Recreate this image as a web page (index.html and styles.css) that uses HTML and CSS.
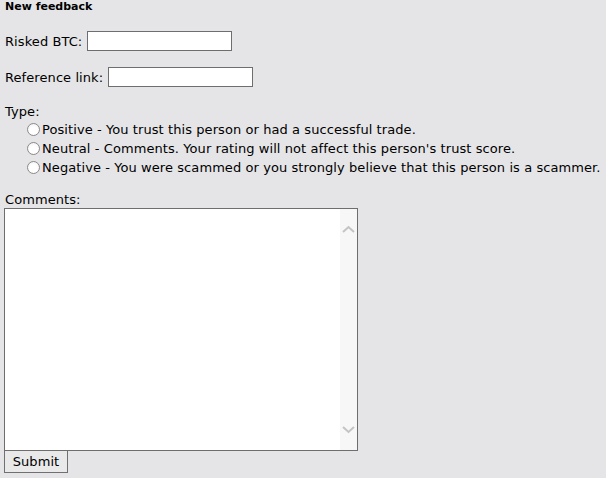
FILE: index.html
```html
<!DOCTYPE html>
<html>
<head>
<meta charset="utf-8">
<link rel="stylesheet" href="styles.css">
</head>
<body>
<div class="title">New feedback</div>
<form class="form">
  <div class="row"><label>Risked BTC:</label> <input class="field" type="text"></div>
  <div class="row"><label>Reference link:</label> <input class="field" type="text"></div>
  <div class="type">
    <div class="type-label">Type:</div>
    <label class="opt"><input class="radio" type="radio" name="t">Positive - You trust this person or had a successful trade.</label>
    <label class="opt"><input class="radio" type="radio" name="t">Neutral - Comments. Your rating will not affect this person's trust score.</label>
    <label class="opt"><input class="radio" type="radio" name="t">Negative - You were scammed or you strongly believe that this person is a scammer.</label>
  </div>
  <div class="comments-label">Comments:</div>
  <div class="textbox">
    <textarea class="ta"></textarea>
    <div class="scroll">
      <svg width="17" height="14" viewBox="0 0 17 14"><path d="M3 9 L8.5 4 L14 9" fill="none" stroke="#c4c4c4" stroke-width="2"/></svg>
      <svg width="17" height="14" viewBox="0 0 17 14"><path d="M3 5 L8.5 10 L14 5" fill="none" stroke="#c4c4c4" stroke-width="2"/></svg>
    </div>
  </div>
  <button class="submit" type="button">Submit</button>
</form>
</body>
</html>
```
FILE: styles.css
```css
html, body {
  margin: 0;
  background: #e5e5e7;
}
body {
  padding: 0 4px;
  font-family: "DejaVu Sans", Verdana, sans-serif;
  font-size: 13px;
  letter-spacing: 0.08px;
  color: #000;
}
.title {
  font-weight: bold;
  font-size: 11px;
  letter-spacing: 0;
  line-height: 14px;
  padding-left: 1px;
}
.form {
  display: flex;
  flex-direction: column;
  align-items: flex-start;
}
.row {
  display: flex;
  align-items: center;
  gap: 5px;
  padding-left: 1px;
  margin-top: 17px;
  height: 20px;
}
.row + .row {
  margin-top: 16px;
}
.field {
  width: 145px;
  height: 20px;
  box-sizing: border-box;
  border: 1px solid #6e6e6e;
  background: #fff;
  margin: 0;
  padding: 0 2px;
}
.type {
  margin-top: 16px;
  padding-left: 1px;
  line-height: 19px;
}
.type-label {
  line-height: 17px;
}
.opt {
  display: flex;
  align-items: center;
  padding-left: 21px;
  white-space: nowrap;
}
.radio {
  appearance: none;
  -webkit-appearance: none;
  width: 13px;
  height: 13px;
  margin: 0 2px 0 1px;
  border: 1px solid #8a8a8a;
  border-radius: 50%;
  background: radial-gradient(circle at 50% 60%, #ffffff 40%, #ededed 100%);
  box-sizing: border-box;
}
.comments-label {
  margin-top: 15px;
  padding-left: 1px;
  line-height: 16px;
}
.textbox {
  display: flex;
  width: 354px;
  height: 243px;
  box-sizing: border-box;
  border: 1px solid #6e6e6e;
  background: #fff;
}
.ta {
  flex: 1;
  border: none;
  outline: none;
  resize: none;
  margin: 0;
  padding: 2px;
  background: #fff;
}
.scroll {
  width: 17px;
  background: #f7f7f7;
  display: flex;
  flex-direction: column;
  justify-content: space-between;
  padding: 14px 0 14px;
}
.scroll svg {
  display: block;
}
.submit {
  margin: 0;
  width: 64px;
  height: 22px;
  box-sizing: border-box;
  border: 1px solid #707070;
  border-top: none;
  background: #e9e9e9;
  font-family: "DejaVu Sans", Verdana, sans-serif;
  font-size: 13px;
  letter-spacing: 0.08px;
  padding: 0;
  color: #000;
}
```
